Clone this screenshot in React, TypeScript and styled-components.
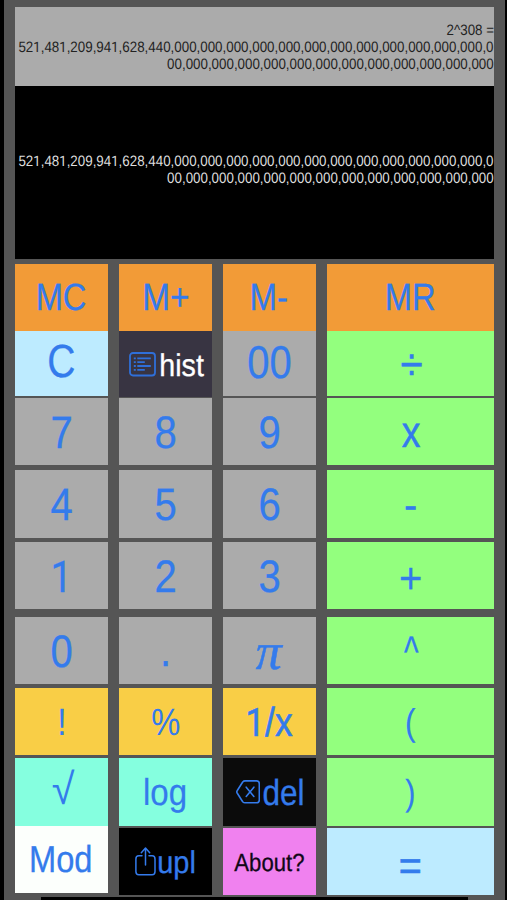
import React from "react";
import styled, { createGlobalStyle, css } from "styled-components";

const GlobalStyle = createGlobalStyle`
  * { box-sizing: border-box; }
  body { margin: 0; background: #000; text-rendering: geometricPrecision; }
`;

const Device = styled.main`
  width: 507px;
  height: 900px;
  padding: 0 2px 0 4px;
  background: #000;
  overflow: hidden;
  font-family: "Liberation Sans", Arial, sans-serif;
`;

const Panel = styled.div`
  height: 900px;
  padding: 7px 11px 0;
  background: #555;
  display: flex;
  flex-direction: column;
`;

const Screen = styled.section`
  flex: none;
  width: 479px;
  display: flex;
  flex-direction: column;
  align-items: flex-end;
  white-space: nowrap;
`;

const History = styled(Screen)`
  height: 79px;
  padding-top: 15px;
  background: #ababab;
  color: #222;
`;

const Result = styled(Screen)`
  height: 173px;
  padding-top: 67px;
  background: #000;
  color: #dedede;
`;

const Line = styled.div`
  height: 17px;
  line-height: 17px;
  font-size: 15px;
  transform: translateX(-0.3px) scaleX(0.89);
  transform-origin: right center;
`;

const One = styled.span`
  font-family: Roboto, "Liberation Sans", sans-serif;
  font-size: 0.965em;
  line-height: 0;
  margin-right: 0.014em;
`;

const Keypad = styled.div`
  flex: none;
  display: grid;
  grid-template-columns: 93px 93px 93px 167px;
  column-gap: 11px;
  margin-top: 5px;
  height: 631px;
`;

const Column = styled.div`
  display: flex;
  flex-direction: column;
`;

const Key = styled.button<{ $bg: string; $h: number; $gap: number; $start?: number }>`
  flex: none;
  display: flex;
  align-items: center;
  justify-content: ${(p) => (p.$start ? "flex-start" : "center")};
  height: ${(p) => p.$h}px;
  margin: ${(p) => p.$gap}px 0 0;
  padding: 0 0 0 ${(p) => p.$start ?? 0}px;
  border: 0;
  background: ${(p) => p.$bg};
  color: #347bec;
  font-family: inherit;
  text-rendering: inherit;
  white-space: nowrap;

  svg { flex: none; display: block; }
`;

const Label = styled.span<{
  $size: number; $sx?: number; $dx?: number; $dy?: number;
  $color?: string; $left?: boolean; $pi?: boolean; $weight?: number;
}>`
  display: block;
  line-height: 1;
  font-size: ${(p) => p.$size}px;
  color: ${(p) => p.$color ?? "inherit"};
  -webkit-text-stroke: ${(p) => p.$weight ?? 0.3}px currentColor;
  transform: translate(${(p) => p.$dx ?? 0}px, ${(p) => (p.$dy ?? 0) + 0.5}px) scaleX(${(p) => p.$sx ?? 0.88});
  transform-origin: ${(p) => (p.$left ? "left" : "center")} center;
  ${(p) => p.$pi && css`
    font-family: "Liberation Serif", serif;
    font-style: italic;
  `}
`;

const HomeEdge = styled.div`
  flex: none;
  height: 3px;
  margin: 2px 26px 0 26px;
  background: #000;
`;

const ListIcon = () => (
  <svg width="27" height="25" viewBox="0 0 27 25" fill="none" stroke="#2f6fd9">
    <rect x="1" y="1" width="25" height="22.5" rx="3" strokeWidth="1.8" />
    <path d="M4.8 6.4h2M4.8 10.2h2M4.8 14h2M4.8 17.9h2" strokeWidth="1.8" />
    <path d="M8.3 6.4h13.5M8.3 10.2h7.500M8.300 14h13.500M8.300 17.900h7.500" strokeWidth="1.8" />
  </svg>
);

const DeleteIcon = () => (
  <svg width="24" height="24" viewBox="0 0 24 24" fill="none" stroke="#347bec" strokeWidth="1.6" strokeLinejoin="round" strokeLinecap="round">
    <path d="M9 .9h11.600q2.700 0 2.700 2.900v16.100q0 2.900-2.700 2.900H9q-1.300 0-2.300-1.100L1.300 13.300q-1-1.400 0-2.800L6.700 2Q7.700.9 9 .9z" />
    <path d="M10.200 7.200l7.700 9.200M17.900 7.200l-7.700 9.200" />
  </svg>
);

const ShareIcon = () => (
  <svg width="21" height="29" viewBox="0 0 21 29" fill="none" stroke="#347bec" strokeWidth="1.5" strokeLinejoin="round" strokeLinecap="round">
    <path d="M7 8.800H3.800Q.9 8.800.9 12v12.400q0 3.300 2.900 3.300h13.300q2.900 0 2.900-3.300V12q0-3.200-2.900-3.200H14" />
    <path d="M10.500 18V1.300M6.300 5.700l4.200-4.600 4.200 4.600" />
  </svg>
);

type Spec = {
  t: string; bg: string; size: number; h?: number; gap?: number;
  sx?: number; dx?: number; dy?: number; color?: string; pi?: boolean;
  weight?: number; start?: number; icon?: React.ReactNode;
};

const ORANGE = "#f29b37";
const GREY = "#ababab";
const GREEN = "#93ff7e";
const YELLOW = "#f9ce46";
const AQUA = "#85ffdf";
const SKY = "#bdebff";

const columns: Spec[][] = [
  [
    { t: "MC", bg: ORANGE, size: 38, sx: 0.86, dx: -0.5, dy: -0.7, gap: 0 },
    { t: "C", bg: SKY, size: 46.5, sx: 0.84, dx: -0.4, dy: -2.2, h: 65, gap: 0 },
    { t: "7", bg: GREY, size: 45.5, gap: 2 },
    { t: "4", bg: GREY, size: 45.5, gap: 5, h: 68 },
    { t: "1", bg: GREY, size: 45.5, gap: 4, dy: 0.6 },
    { t: "0", bg: GREY, size: 45.5, gap: 8 },
    { t: "!", bg: YELLOW, size: 38, dx: 0.6, dy: 0.2, gap: 4, weight: 0 },
    { t: "√", bg: AQUA, size: 43.6, sx: 0.95, dx: 1.1, dy: -1.4, gap: 3, h: 68, weight: 0 },
    { t: "Mod", bg: "#fcfffc", size: 37.5, sx: 0.87, dx: -0.7, dy: -0.2, gap: 0 },
  ],
  [
    { t: "M+", bg: ORANGE, size: 38, dy: -0.7, gap: 0 },
    { t: "hist", bg: "#383442", size: 31.5, sx: 0.91, dy: 1.4, h: 66, gap: 0, color: "#fff", icon: <ListIcon />, start: 10, dx: 3.3 },
    { t: "8", bg: GREY, size: 45.5, gap: 1 },
    { t: "5", bg: GREY, size: 45.5, gap: 5, h: 68, dy: 0.5 },
    { t: "2", bg: GREY, size: 45.5, gap: 4, dy: 0.5 },
    { t: ".", bg: GREY, size: 45.5, gap: 8, dx: 0.3, dy: -0.7 },
    { t: "%", bg: YELLOW, size: 38, sx: 0.86, gap: 4, weight: 0 },
    { t: "log", bg: AQUA, size: 37.6, gap: 3, h: 68, weight: 0.2 },
    { t: "upl", bg: "#000", size: 31.5, sx: 0.92, dx: 1.2, dy: 0.7, gap: 2, icon: <ShareIcon />, start: 16 },
  ],
  [
    { t: "M-", bg: ORANGE, size: 38, sx: 0.87, dx: -0.3, dy: -0.7, gap: 0 },
    { t: "00", bg: GREY, size: 46, sx: 0.87, dy: -2.1, h: 65, gap: 0 },
    { t: "9", bg: GREY, size: 45.5, gap: 2 },
    { t: "6", bg: GREY, size: 45.5, gap: 5, h: 68, dy: 0.3 },
    { t: "3", bg: GREY, size: 45.5, gap: 4, dy: 0.6 },
    { t: "π", bg: GREY, size: 52, sx: 1, dx: -0.6, dy: 1, gap: 8, pi: true, weight: 0.5 },
    { t: "1/x", bg: YELLOW, size: 40.5, sx: 0.87, dy: 0.9, gap: 4, weight: 0.6 },
    { t: "del", bg: "#0b0b0b", size: 36.3, sx: 0.87, dx: 2.4, dy: 0.9, gap: 3, h: 68, icon: <DeleteIcon />, start: 13 },
    { t: "About?", bg: "#f081ef", size: 24.9, sx: 0.89, dy: 1, gap: 2, color: "#100818" },
  ],
  [
    { t: "MR", bg: ORANGE, size: 38, sx: 0.86, dx: -0.3, dy: -0.7, gap: 0 },
    { t: "÷", bg: GREEN, size: 46, sx: 0.88, dx: 0.9, dy: -0.2, h: 65, gap: 0, weight: 0.5 },
    { t: "x", bg: GREEN, size: 44, sx: 0.85, gap: 2, weight: 0.5 },
    { t: "-", bg: GREEN, size: 45.5, gap: 5, h: 68, dy: 0.4 },
    { t: "+", bg: GREEN, size: 43.5, sx: 0.92, dy: 3.8, gap: 4 },
    { t: "^", bg: GREEN, size: 44.4, sx: 0.7, dx: 0.8, dy: 2.2, gap: 8, weight: 0.3 },
    { t: "(", bg: GREEN, size: 37.2, sx: 0.85, dy: 0.3, gap: 4, weight: 0.2 },
    { t: ")", bg: "#96ff86", size: 36, sx: 0.85, dx: -0.7, dy: 0.7, gap: 3, h: 68, weight: 0.2 },
    { t: "=", bg: SKY, size: 42, sx: 0.94, dy: 3.8, gap: 2, weight: 0.6 },
  ],
];

/* The numeral one is set in a face whose "1" has no foot. */
const Digits = ({ text }: { text: string }) => (
  <>{text.split(/(1)/).map((part, i) => (part === "1" ? <One key={i}>1</One> : part))}</>
);

const VALUE_HEAD = "521,481,209,941,628,440," + "000,".repeat(12) + "0";
const VALUE_TAIL = "00," + "000,".repeat(11) + "000";

export default function App() {
  return (
    <Device>
      <GlobalStyle />
      <Panel>
        <History>
          <Line>2^308 =</Line>
          <Line><Digits text={VALUE_HEAD} /></Line>
          <Line>{VALUE_TAIL}</Line>
        </History>
        <Result>
          <Line><Digits text={VALUE_HEAD} /></Line>
          <Line>{VALUE_TAIL}</Line>
        </Result>
        <Keypad>
          {columns.map((keys, c) => (
            <Column key={c}>
              {keys.map((k) => (
                <Key key={k.t} $bg={k.bg} $h={k.h ?? 67} $gap={k.gap ?? 0} $start={k.start}>
                  {k.icon}
                  <Label
                    $size={k.size} $sx={k.sx} $dx={k.dx} $dy={k.dy} $color={k.color}
                    $left={!!k.icon} $pi={k.pi} $weight={k.weight}
                  >
                    <Digits text={k.t} />
                  </Label>
                </Key>
              ))}
            </Column>
          ))}
        </Keypad>
        <HomeEdge />
      </Panel>
    </Device>
  );
}
